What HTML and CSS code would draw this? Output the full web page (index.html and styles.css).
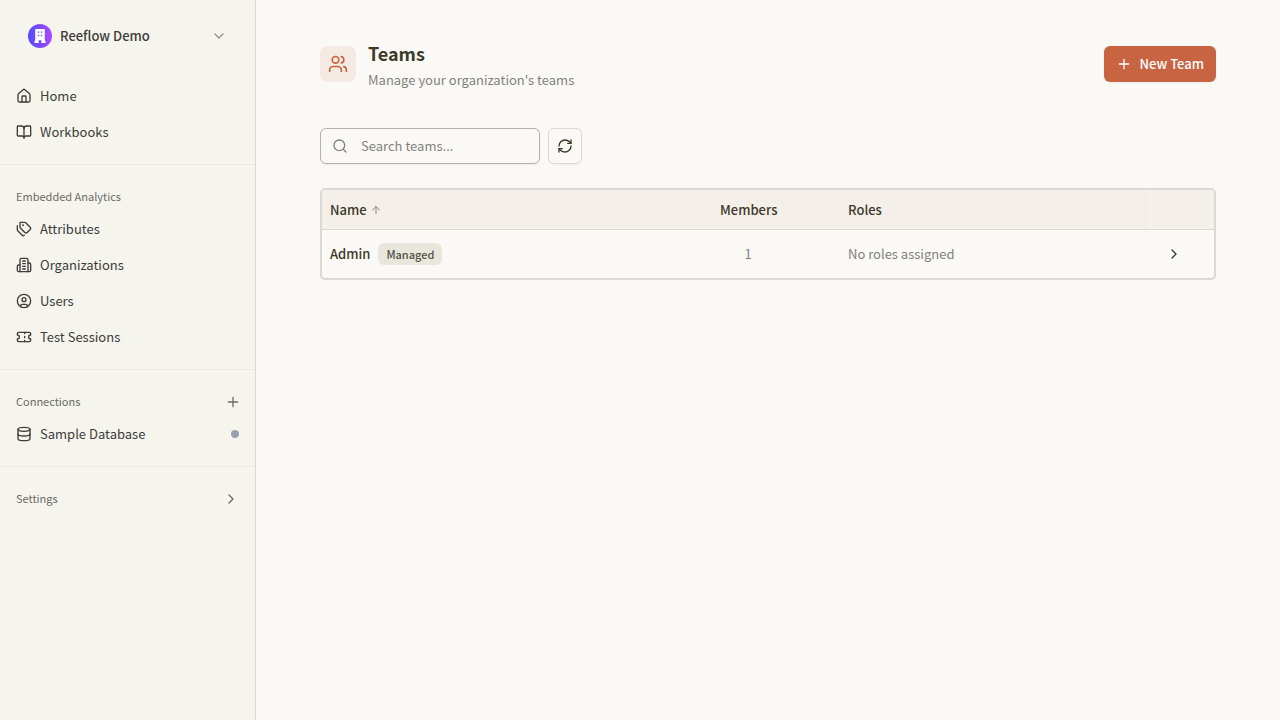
FILE: index.html
```html
<!DOCTYPE html>
<html lang="en">
<head>
    <meta charset="UTF-8">
    <meta name="viewport" content="width=device-width, initial-scale=1.0">
    <title>Teams - Reeflow Demo</title>
    <link rel="stylesheet" href="styles.css">
</head>
<body>
    <aside class="sidebar">
        <button class="org-switcher" type="button">
            <span class="org-logo">
                <svg viewBox="0 0 14 14" width="14" height="14">
                    <path fill="#fff" fill-rule="evenodd" d="M3 0h8a.8.8 0 0 1 .8.8v11h.7V14H8.400v-2.800H5.600V14H1.500v-2.200h.7V.8A.8.8 0 0 1 3 0zM4.800 2.400v1.400h1.400V2.400zM7.800 2.400v1.400h1.400V2.400zM4.800 5.800v1.400h1.400V5.800zM7.800 5.800v1.400h1.400V5.800z"/>
                </svg>
            </span>
            <span class="org-name">Reeflow Demo</span>
            <svg class="icon org-chevron" viewBox="0 0 24 24"><path d="m6 9 6 6 6-6"/></svg>
        </button>

        <nav class="nav-section">
            <a class="nav-link" href="#">
                <svg class="icon" viewBox="0 0 24 24"><path d="M15 21v-8a1 1 0 0 0-1-1h-4a1 1 0 0 0-1 1v8"/><path d="M3 10a2 2 0 0 1 .709-1.528l7-5.999a2 2 0 0 1 2.582 0l7 5.999A2 2 0 0 1 21 10v9a2 2 0 0 1-2 2H5a2 2 0 0 1-2-2z"/></svg>
                Home
            </a>
            <a class="nav-link" href="#">
                <svg class="icon" viewBox="0 0 24 24"><path d="M12 7v14"/><path d="M3 18a1 1 0 0 1-1-1V4a1 1 0 0 1 1-1h5a4 4 0 0 1 4 4 4 4 0 0 1 4-4h5a1 1 0 0 1 1 1v13a1 1 0 0 1-1 1h-6a3 3 0 0 0-3 3 3 3 0 0 0-3-3z"/></svg>
                Workbooks
            </a>
        </nav>

        <nav class="nav-section">
            <h2 class="nav-title">Embedded Analytics</h2>
            <a class="nav-link" href="#">
                <svg class="icon" viewBox="0 0 24 24"><path d="M13.172 2a2 2 0 0 1 1.414.586l6.710 6.710a2.400 2.400 0 0 1 0 3.408l-4.592 4.592a2.400 2.400 0 0 1-3.408 0l-6.710-6.710A2 2 0 0 1 6 9.172V3a1 1 0 0 1 1-1z"/><path d="M2 7v6.172a2 2 0 0 0 .586 1.414l6.710 6.710a2.400 2.400 0 0 0 3.191.193"/><circle cx="10.5" cy="6.5" r=".5" fill="currentColor"/></svg>
                Attributes
            </a>
            <a class="nav-link" href="#">
                <svg class="icon" viewBox="0 0 24 24"><path d="M6 22V4a2 2 0 0 1 2-2h8a2 2 0 0 1 2 2v18Z"/><path d="M6 12H4a2 2 0 0 0-2 2v6a2 2 0 0 0 2 2h2"/><path d="M18 9h2a2 2 0 0 1 2 2v9a2 2 0 0 1-2 2h-2"/><path d="M10 6h4M10 10h4M10 14h4M10 18h4"/></svg>
                Organizations
            </a>
            <a class="nav-link" href="#">
                <svg class="icon" viewBox="0 0 24 24"><circle cx="12" cy="12" r="10"/><circle cx="12" cy="10" r="3"/><path d="M7 20.662V19a2 2 0 0 1 2-2h6a2 2 0 0 1 2 2v1.662"/></svg>
                Users
            </a>
            <a class="nav-link" href="#">
                <svg class="icon" viewBox="0 0 24 24"><path d="M2 9a3 3 0 0 1 0 6v2a2 2 0 0 0 2 2h16a2 2 0 0 0 2-2v-2a3 3 0 0 1 0-6V7a2 2 0 0 0-2-2H4a2 2 0 0 0-2 2Z"/><path d="M13 5v2M13 17v2M13 11v2"/></svg>
                Test Sessions
            </a>
        </nav>

        <nav class="nav-section">
            <div class="nav-heading">
                <h2 class="nav-title">Connections</h2>
                <button class="nav-add" type="button" aria-label="Add connection">
                    <svg class="icon" viewBox="0 0 24 24"><path d="M5 12h14M12 5v14"/></svg>
                </button>
            </div>
            <a class="nav-link" href="#">
                <svg class="icon" viewBox="0 0 24 24"><ellipse cx="12" cy="5" rx="9" ry="3"/><path d="M3 5v14a9 3 0 0 0 18 0V5"/><path d="M3 12a9 3 0 0 0 18 0"/></svg>
                Sample Database
                <span class="status-dot"></span>
            </a>
        </nav>

        <nav class="nav-section">
            <button class="nav-toggle" type="button">
                <span class="nav-title">Settings</span>
                <svg class="icon" viewBox="0 0 24 24"><path d="m9 18 6-6-6-6"/></svg>
            </button>
        </nav>
    </aside>

    <main class="content">
        <header class="page-header">
            <span class="page-icon">
                <svg class="icon icon-lg" viewBox="0 0 24 24"><path d="M16 21v-2a4 4 0 0 0-4-4H6a4 4 0 0 0-4 4v2"/><circle cx="9" cy="7" r="4"/><path d="M22 21v-2a4 4 0 0 0-3-3.870"/><path d="M16 3.130a4 4 0 0 1 0 7.750"/></svg>
            </span>
            <div class="page-heading">
                <h1>Teams</h1>
                <p>Manage your organization's teams</p>
            </div>
            <button class="btn-primary" type="button">
                <svg class="icon" viewBox="0 0 24 24"><path d="M5 12h14M12 5v14"/></svg>
                New Team
            </button>
        </header>

        <div class="toolbar">
            <label class="search">
                <svg class="icon" viewBox="0 0 24 24"><circle cx="11" cy="11" r="8"/><path d="m21 21-4.300-4.300"/></svg>
                <input type="text" placeholder="Search teams..." aria-label="Search teams">
            </label>
            <button class="btn-refresh" type="button" aria-label="Refresh">
                <svg class="icon" viewBox="0 0 24 24"><path d="M3 12a9 9 0 0 1 9-9 9.750 9.750 0 0 1 6.740 2.740L21 8"/><path d="M21 3v5h-5"/><path d="M21 12a9 9 0 0 1-9 9 9.750 9.750 0 0 1-6.740-2.740L3 16"/><path d="M8 16H3v5"/></svg>
            </button>
        </div>

        <div class="table-wrap">
            <table class="teams">
                <thead>
                    <tr>
                        <th class="col-name">
                            <span class="sortable">Name
                                <svg class="icon icon-sm" viewBox="0 0 24 24"><path d="m5 12 7-7 7 7"/><path d="M12 19V5"/></svg>
                            </span>
                        </th>
                        <th class="col-members">Members</th>
                        <th class="col-roles">Roles</th>
                        <th class="col-open"></th>
                    </tr>
                </thead>
                <tbody>
                    <tr>
                        <td>
                            <span class="team-name">Admin <span class="badge">Managed</span></span>
                        </td>
                        <td><span class="count">1</span></td>
                        <td class="muted">No roles assigned</td>
                        <td>
                            <button class="row-open" type="button" aria-label="Open Admin">
                                <svg class="icon" viewBox="0 0 24 24"><path d="m9 18 6-6-6-6"/></svg>
                            </button>
                        </td>
                    </tr>
                </tbody>
            </table>
        </div>
    </main>
</body>
</html>
```
FILE: styles.css
```css
* {
    box-sizing: border-box;
}

body {
    display: flex;
    min-height: 100vh;
    margin: 0;
    font-family: "Noto Sans CJK SC", "Noto Sans", sans-serif;
    font-size: 13px;
    line-height: 20px;
    font-weight: 500;
    color: #3d3929;
    background: #faf9f5;
}

h1, h2, p {
    margin: 0;
}

button, input {
    font: inherit;
    color: inherit;
}

button {
    padding: 0;
    border: none;
    background: none;
    cursor: pointer;
}

.icon {
    flex: none;
    display: block;
    width: 16px;
    height: 16px;
    fill: none;
    stroke: currentColor;
    stroke-width: 2;
    stroke-linecap: round;
    stroke-linejoin: round;
}

.icon-sm {
    width: 12px;
    height: 12px;
}

.icon-lg {
    width: 20px;
    height: 20px;
}

/* Sidebar */
.sidebar {
    flex: none;
    width: 256px;
    border-right: 1px solid #dad9d4;
    background: #f5f4ed;
    color: #3d3d3a;
}

.org-switcher {
    display: flex;
    align-items: center;
    gap: 8px;
    width: 100%;
    height: 72px;
    padding: 0 28px;
    text-align: left;
}

.org-logo {
    display: flex;
    align-items: center;
    justify-content: center;
    width: 24px;
    height: 24px;
    border-radius: 50%;
    background: linear-gradient(90deg, #4f4dfb, #ad46ff);
}

.org-name {
    flex: 1;
}

.org-chevron {
    color: #91918d;
}

.nav-section {
    padding: 17px 0 14px;
    border-bottom: 1px solid #e8e8e6;
}

.org-switcher + .nav-section {
    padding-top: 6px;
}

.nav-section:last-child {
    border-bottom: none;
}

.nav-link {
    display: flex;
    align-items: center;
    gap: 8px;
    height: 36px;
    padding: 0 16px;
    color: inherit;
    font-weight: 400;
    text-decoration: none;
}

.nav-heading, .nav-toggle {
    display: flex;
    align-items: center;
    justify-content: space-between;
    width: 100%;
    padding-right: 14px;
}

.nav-add, .nav-toggle {
    color: #6c6b66;
}

.nav-toggle {
    padding-right: 16px;
}

.nav-title {
    padding: 5px 16px 6px;
    font-size: 11px;
    line-height: 18px;
    font-weight: 400;
    color: #6c6b66;
}

.status-dot {
    width: 8px;
    height: 8px;
    margin-left: auto;
    border-radius: 50%;
    background: #99a1af;
}

/* Page content */
.content {
    flex: 1;
    padding: 38px 64px;
}

.page-header {
    display: flex;
    align-items: center;
    gap: 12px;
}

.page-icon {
    display: flex;
    align-items: center;
    justify-content: center;
    width: 36px;
    height: 36px;
    border-radius: 8px;
    background: #f5e9e3;
    color: #c96442;
}

.page-heading {
    flex: 1;
}

.page-heading h1 {
    margin-bottom: 2px;
    font-size: 18px;
    line-height: 30px;
    font-weight: 700;
}

.page-heading p {
    color: #83827d;
    font-weight: 400;
}

.btn-primary {
    display: flex;
    align-items: center;
    gap: 8px;
    height: 36px;
    padding: 0 12px;
    border-radius: 6px;
    background: #c96442;
    color: #fff;
    box-shadow: 0 1px 2px rgba(0, 0, 0, 0.05);
}

.toolbar {
    display: flex;
    gap: 8px;
    margin: 38px 0 24px;
}

.search {
    display: flex;
    align-items: center;
    gap: 13px;
    width: 220px;
    height: 36px;
    padding: 0 11px;
    border: 1px solid #b4b2a7;
    border-radius: 6px;
    color: #83827d;
    box-shadow: 0 1px 2px rgba(0, 0, 0, 0.05);
}

.search input {
    flex: 1;
    min-width: 0;
    padding: 0;
    border: none;
    outline: none;
    background: none;
    color: #3d3929;
    font-weight: 400;
}

.search input::placeholder {
    color: #83827d;
    opacity: 1;
}

.btn-refresh {
    display: flex;
    align-items: center;
    justify-content: center;
    width: 34px;
    height: 36px;
    border: 1px solid #dad9d4;
    border-radius: 6px;
    box-shadow: 0 1px 2px rgba(0, 0, 0, 0.05);
}

/* Teams table */
.table-wrap {
    overflow: hidden;
    border: 2px solid #dad9d4;
    border-radius: 5px;
}

.teams {
    width: 100%;
    table-layout: fixed;
    border-spacing: 0;
}

.teams th, .teams td {
    padding: 0 8px;
    text-align: left;
}

.teams th {
    height: 40px;
    border-bottom: 1px solid #dad9d4;
    background: #f4f0e9;
    font-weight: 500;
}

.teams td {
    height: 48px;
}

.col-members {
    width: 128px;
}

.col-roles {
    width: 310px;
}

.col-open {
    width: 64px;
}

.teams .col-open {
    border-left: 1px solid #f7f5f0;
}

.sortable {
    display: flex;
    align-items: center;
    gap: 3px;
}

.sortable .icon {
    color: #83827d;
}

.team-name {
    display: flex;
    align-items: center;
    gap: 8px;
}

.badge {
    padding: 2px 8px;
    border-radius: 6px;
    background: #e9e6dc;
    color: #535146;
    font-size: 11px;
    line-height: 18px;
}

.muted, .count {
    color: #83827d;
    font-weight: 400;
}

.count {
    display: block;
    width: 56px;
    text-align: center;
}

.row-open {
    display: flex;
    align-items: center;
    justify-content: center;
    width: 32px;
    height: 32px;
}
```
